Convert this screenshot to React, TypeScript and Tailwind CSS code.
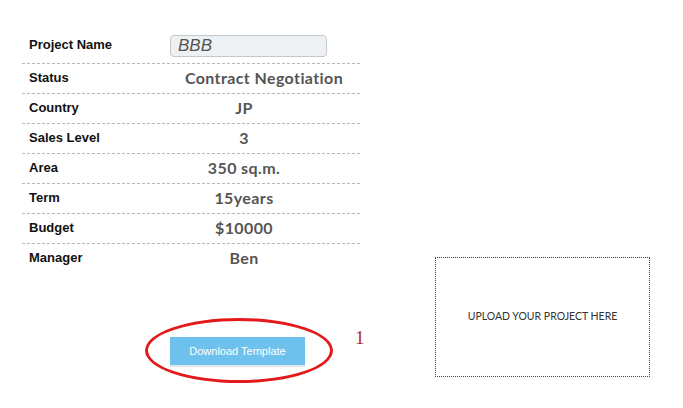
const rows = [
    { label: 'Status', value: 'Contract Negotiation', shift: 'pl-[40px]' },
    { label: 'Country', value: 'JP' },
    { label: 'Sales Level', value: '3' },
    { label: 'Area', value: '350 sq.m.' },
    { label: 'Term', value: '15years' },
    { label: 'Budget', value: '$10000' },
    { label: 'Manager', value: 'Ben' },
];

export default function App() {
    return (
        <div className="flex h-[408px] w-[683px] overflow-hidden bg-white font-['Liberation_Sans',Arial,sans-serif]">
            <section className="ml-[22px] flex w-[338px] flex-col pt-[30px]">
                <div className="flex h-[34px] items-start border-b border-dashed border-[#b9b9b9] pt-[4px]">
                    <div className="w-[106px] pt-[1px] pl-[7px] text-[13px] font-bold text-[#111]">Project Name</div>
                    <div className="pl-[42px]">
                        <input
                            readOnly
                            value="BBB"
                            className="h-[22px] w-[157px] rounded-[4px] border border-[#c4c8cc] bg-[#eef1f4] px-[7px] text-[17px] text-[#555] italic outline-none"
                        />
                    </div>
                </div>
                {rows.map((row, i) => (
                    <div
                        key={row.label}
                        className={`flex h-[30px] items-center pb-[2px] ${i < rows.length - 1 ? 'border-b border-dashed border-[#b9b9b9]' : ''}`}
                    >
                        <div className="w-[106px] pl-[7px] text-[13px] font-bold text-[#111]">{row.label}</div>
                        <div
                            className={`flex-1 text-center font-['Lato',sans-serif] text-[16px] font-bold tracking-[0.4px] text-[#555] ${row.shift ?? ''}`}
                        >
                            {row.value}
                        </div>
                    </div>
                ))}
                <div className="mt-[54px] flex items-start pl-[148px]">
                    <div className="relative mt-[9px]">
                        <button className="h-[28px] w-[135px] bg-[#6ec1ec] text-[11px] text-white shadow-[0_2px_0_#e3e7ea]">
                            Download Template
                        </button>
                        <div className="pointer-events-none absolute top-[-19px] left-[-25px] h-[65px] w-[188px] rounded-[50%] border-[3px] border-[#e3191b]" />
                    </div>
                    <span className="mt-[-4px] ml-[50px] font-['Liberation_Serif',serif] text-[19px] text-[#b02a30]">1</span>
                </div>
            </section>
            <section className="mt-[257px] ml-[75px]">
                <div className="flex h-[120px] w-[215px] items-center justify-center border border-dotted border-[#444]">
                    <span className="font-['Lato',sans-serif] text-[10.5px] text-[#333]">UPLOAD YOUR PROJECT HERE</span>
                </div>
            </section>
        </div>
    );
}
